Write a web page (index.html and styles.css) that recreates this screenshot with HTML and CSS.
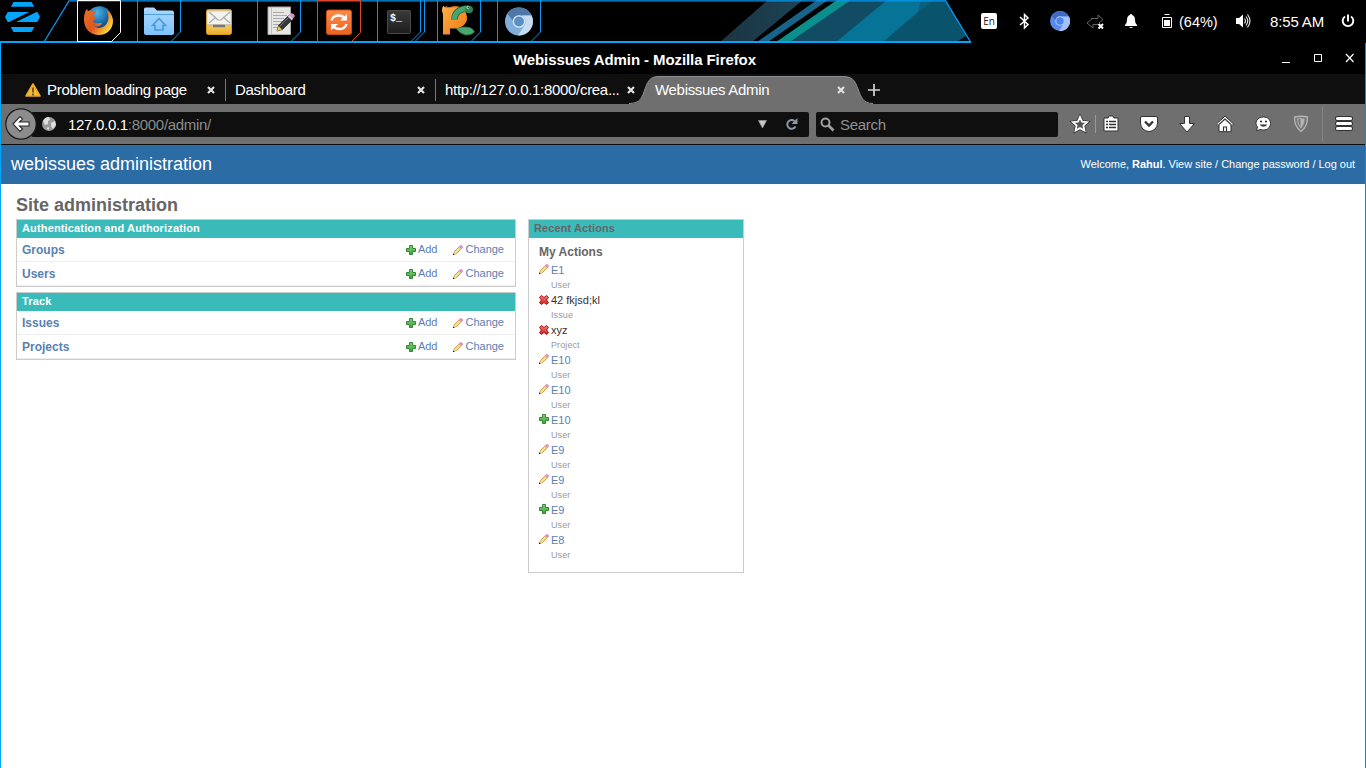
FILE: index.html
```html
<!DOCTYPE html>
<html lang="en">
<head>
<meta charset="utf-8">
<title>Webissues Admin</title>
<link rel="stylesheet" href="styles.css">
</head>
<body>
<svg class="defs" aria-hidden="true">
  <defs>
    <linearGradient id="gPlus" x2="0" y2="1"><stop stop-color="#7fd07a"/><stop offset="1" stop-color="#3fa53c"/></linearGradient>
    <linearGradient id="gRed" x2="0" y2="1"><stop stop-color="#f58080"/><stop offset="1" stop-color="#d01c1c"/></linearGradient>
    <linearGradient id="gFolder" x2="0" y2="1"><stop stop-color="#a9d9ff"/><stop offset="1" stop-color="#7fc3fb"/></linearGradient>
    <linearGradient id="gMail" x2="0" y2="1"><stop stop-color="#f6c65a"/><stop offset=".5" stop-color="#ffd978"/><stop offset="1" stop-color="#e9a928"/></linearGradient>
    <linearGradient id="gOrange" x2="0" y2="1"><stop stop-color="#ff8a4a"/><stop offset="1" stop-color="#ea6322"/></linearGradient>
    <linearGradient id="gTerm" x2="0" y2="1"><stop stop-color="#3a3a3a"/><stop offset="1" stop-color="#1d1d1d"/></linearGradient>
    <linearGradient id="gFox" x1="0" y1="0" x2="1" y2=".6"><stop stop-color="#e8702a"/><stop offset=".55" stop-color="#e2571c"/><stop offset="1" stop-color="#ffd93b"/></linearGradient>
    <radialGradient id="gGlobe" cx=".4" cy=".25" r=".8"><stop stop-color="#49b7e6"/><stop offset=".6" stop-color="#155fa3"/><stop offset="1" stop-color="#0b2a63"/></radialGradient>
    <linearGradient id="gP" x2="1" y2="1"><stop stop-color="#ffb04a"/><stop offset="1" stop-color="#f07810"/></linearGradient>
    <symbol id="plus" viewBox="0 0 10 10"><path d="M3.500.5h3v3h3v3h-3v3h-3v-3h-3v-3h3z" fill="url(#gPlus)" stroke="#2f8a31"/></symbol>
    <symbol id="pencil" viewBox="0 0 10 10"><path d="M.7 9.300l.8-2.800L6.500 1.500l2 2-5 5z" fill="#fbe08a" stroke="#b9852c" stroke-width=".8"/><path d="M1.200 7.200l1.700 1.600-2.200.6z" fill="#f4e3cd"/><path d="M0 8.700h1.300V10H0z" fill="#2b1a12"/><path d="M5.900 2.100l2 2" stroke="#c5c5c5" stroke-width="1.200"/><path d="M6.800 1.300L8 .2 9.800 2 8.700 3.200z" fill="#ef8fd9" stroke="#d983c6" stroke-width=".8"/></symbol>
    <symbol id="cross" viewBox="0 0 10 10"><path d="M2.300.5L5 2.500 7.700.5 9.500 2.300 7.600 5l1.900 2.700-1.800 1.800L5 7.500 2.300 9.500.5 7.700 2.400 5 .5 2.300z" fill="url(#gRed)" stroke="#a51212"/></symbol>
    <symbol id="tabx" viewBox="0 0 8 8"><path d="M1 1l6 6M7 1L1 7" stroke="#e2e2e2" stroke-width="2.200"/></symbol>
  </defs>
</svg>

<header class="panel">
  <svg class="panel-art" width="980" height="44" viewBox="0 0 980 44">
    <clipPath id="clip"><path d="M0 0H946L971 42H0z"/></clipPath>
    <linearGradient id="band" x1="0" x2="1"><stop stop-color="#1b3442"/><stop offset="1" stop-color="#1c4356"/></linearGradient>
    <g clip-path="url(#clip)">
      <path d="M768 0h35l-51 42h-32z" fill="url(#band)"/>
      <path d="M817 0h11l-60 42h-11z" fill="#17638a"/>
      <path d="M850 0h100v42H790z" fill="#124b64"/>
      <path d="M837 0h14l-61 42h-14z" fill="#0a8f8c"/>
      <path d="M887 0h60l-55 42h-56z" fill="#067496"/>
      <path d="M918 12L934 0h20l20 42h-91z" fill="#0a536d"/>
      <path d="M918 12L921 0h14z" fill="#0a5f7d"/>
      <path d="M971 33l-15 9h15z" fill="#010d14"/>
    </g>
    <path d="M44 42L69 .8H945.500L970 41" fill="none" stroke="#0496f0" stroke-width="1.300"/>
    <path d="M0 42H971" stroke="#04a4fa" stroke-width="2"/>
    <g fill="#04a4fa"><path d="M13.500 2h18l2.800 4.700H10.800z"/><path d="M7.700 12h21.500L9 22H7.700L5 17z"/><path d="M36.500 12h1L40 17l-2.700 5H16z"/><path d="M10.800 27h23.500l-2.800 5h-18z"/></g>
  </svg>
  <nav class="launchers">
    <svg class="slot" viewBox="0 0 60 42"><path d="M.5.5h43v32l-9 9H.5z" fill="none" stroke="#fff"/>
      <circle cx="22.500" cy="19" r="12.800" fill="url(#gGlobe)"/>
      <path d="M8 13c0-2 1-3 2-4l1 2c2-1 3-1 4 0 2 0 4 0 4 1-1 2-3 2-3 4l3 1c0 2-3 2-3 4 1 3 5 2 9 2-1 3-5 4-8 3 5 4 11 1 13-3 3-5 1-10-1-13 4 2 7 6 7 11 0 8-6 14-14 14S7 29 7 20c0-3 0-5 1-7z" fill="url(#gFox)"/></svg>
    <svg class="slot" viewBox="0 0 60 42"><path d="M.5 0v41M43.500 0v32l-9 9" fill="none" stroke="#0496f0"/>
      <path d="M7 9q0-1.500 1.500-1.500H17l3 3h15q2 0 2 2V33q0 2-2 2H9q-2 0-2-2z" fill="url(#gFolder)"/><path d="M7 14.500h30" stroke="#549fd8"/><path d="M15.500 25.500L22 18.500l6.500 7h-2.500v4.500H18v-4.500z" fill="none" stroke="#4b9ad8" stroke-width="1.700"/></svg>
    <svg class="slot" viewBox="0 0 60 42"><rect x="9.500" y="9.500" width="25" height="25" rx="2" fill="url(#gMail)" stroke="#d99a1c"/><path d="M10 11h24v13.500H10z" fill="#f3f3ee" stroke="#bbb" stroke-width=".7"/><path d="M12 12l9 8h3l9-8M12 23l7-6M33 23l-7-6" fill="none" stroke="#aaa" stroke-width="1.200"/><path d="M10 25h24v2H10z" fill="#f2c04c"/><path d="M16 26h12" stroke="#78777a" stroke-width="2.500"/></svg>
    <svg class="slot" viewBox="0 0 60 42"><path d="M.5 0v41M43.500 0v32l-9 9" fill="none" stroke="#0496f0"/>
      <path d="M11 7h22.500v27.500H11z" fill="#e6e6e4" stroke="#aaa"/><path d="M14.500 7v27" stroke="#eeaaaa"/><path d="M16 12.500h11M16 15.500h14M16 18.500h11M16 21.500h11M16 24.500h8M16 27.500h5" stroke="#aaa"/><path d="M20 31l1.500-5.500L32 15l4 4-10.500 10.500z" fill="#383838" stroke="#111" stroke-width=".6"/><path d="M23 26l9-9" stroke="#777"/><path d="M20 31l1.500-5 3.500 3.500z" fill="#f1c44d"/><path d="M31.500 15.500l4 4" stroke="#ddd" stroke-width="2"/><path d="M33 14q3-2 5 2l-2 2.500-4-3.500z" fill="#dc91d4"/></svg>
    <svg class="slot" viewBox="0 0 60 42"><path d="M.5.5h43v32l-9 9H.5z" fill="none" stroke="#dc452d"/>
      <rect x="9.500" y="10" width="25" height="24.500" rx="2" fill="url(#gOrange)" stroke="#c64e12"/><path d="M14.500 20.500q1.500-5 7-5 4 0 6 2.500M29.500 24q-1.500 5-7 5-4 0-6-2.500" fill="none" stroke="#fff" stroke-width="2.400"/><path d="M30 14v6.500h-7zM14 30.500V24h7z" fill="#fff"/></svg>
    <svg class="slot" viewBox="0 0 60 42"><path d="M.5 0v41M43.500 0v32l-9 9M47.500 0v32l-9 9" fill="none" stroke="#0496f0"/>
      <rect x="10.500" y="10.500" width="23" height="23" rx="1" fill="url(#gTerm)" stroke="#4a4a4a"/><text x="13" y="21" class="term">$_</text></svg>
    <svg class="slot" viewBox="0 0 60 42"><path d="M.5 0v41M43.500 0v32l-9 9" fill="none" stroke="#0496f0"/>
      <path d="M19 28.500q3-2 9-1.500 8 0 9.500 5-3 3.500-9 3-5-1-9.500-6.500z" fill="#4aa56f" stroke="#1f6b43" stroke-width=".7"/>
      <path d="M9 33.500V22q0-5.500 6-5.500M7 8q3 3 8 1.500 4-1 6 0M12 25h5q10-1 10-7" fill="none" stroke="#d96c0c" stroke-width="6"/>
      <path d="M6.500 6q3 3.500 8.500 1.500 14-2 15 9 0 10-11 12h-6v6h-7V21q0-8 8-8h4q4 1 4 5t-5 5h-3q2-4-1-5-3 0-7 4V14q-2-4 0-8z" fill="url(#gP)"/>
      <path d="M17.500 19.500c0-7 5-11 14-11" fill="none" stroke="#1e6845" stroke-width="6.500"/><path d="M17.500 19.500c0-7 5-11 14-11" fill="none" stroke="#46a670" stroke-width="5"/><ellipse cx="32" cy="9.500" rx="4" ry="3.700" fill="#2e8354"/><circle cx="31" cy="7.500" r="1.300" fill="#fff"/><circle cx="31.300" cy="7.500" r=".7" fill="#000"/></svg>
    <svg class="slot" viewBox="0 0 60 42"><path d="M.5 0v41M43.500 0v32l-9 9" fill="none" stroke="#0496f0"/>
      <circle cx="22" cy="21.500" r="14" fill="#80add9"/><path d="M22 7.500a14 14 0 0 1 12.500 8H22q-5 0-6 5L10 13.500Q14 7.500 22 7.500z" fill="#4f78a6"/><path d="M34.500 15.500A14 14 0 0 1 21 35.500l7-11q2-5-3-9z" fill="#c7dcf0"/><circle cx="22" cy="21.500" r="6.300" fill="#d5e6f6"/><circle cx="22" cy="21.500" r="5" fill="#5b8fc4"/></svg>
  </nav>
  <div class="tray">
    <span class="lang">En</span>
    <svg class="ti bt" viewBox="0 0 20 20"><path d="M6 6l8 7.500-3.500 3.500V3.500L14 7l-8 7" fill="none" stroke="#fff" stroke-width="1.500"/></svg>
    <svg class="ti chr" viewBox="0 0 20 20"><circle cx="10" cy="10" r="10" fill="#5b8bea"/><path d="M10 0a10 10 0 0 1 9 5.500H10q-4 0-4.500 4L1.500 4.500Q4.500 0 10 0z" fill="#4069c4"/><path d="M19 5.500A10 10 0 0 1 9 20l5-8q1-4-2-6.500z" fill="#a3c1fb"/><circle cx="10" cy="10" r="4.700" fill="#b5cffc"/><circle cx="10" cy="10" r="3.700" fill="#4a86f2"/></svg>
    <svg class="ti net" viewBox="0 0 20 20"><path d="M5 7.500h7V4l5 4.500-4 3.500M12 13.500H7V17l-6-5 6-5" fill="none" stroke="#666"/><path d="M12.500 13l4.500 4.500M17 13l-4.500 4.500" stroke="#fff" stroke-width="2"/></svg>
    <svg class="ti bell" viewBox="0 0 20 20"><path d="M10 3q1 0 1.300 1Q14 5 14 9q0 3.500 2 5v1H4v-1q2-1.500 2-5 0-4 2.700-5Q9 3 10 3zM8 16h4q-2 2-4 0z" fill="#fff"/></svg>
    <svg class="ti bat" viewBox="0 0 20 20"><path d="M7.500 3.500h5M5.500 6.500h9v10h-9z" fill="none" stroke="#fff"/><path d="M7 9h6v6H7z" fill="#fff"/></svg>
    <span class="pct">(64%)</span>
    <svg class="ti vol" viewBox="0 0 20 20"><path d="M3 7h3l4-3.500v13L6 13H3z" fill="#fff"/><path d="M11.500 7.500q2 2.500 0 5M13 5.500q3.500 4.500 0 9M14.500 3.500q5 6.500 0 13" fill="none" stroke="#ddd" stroke-width="1.200"/></svg>
    <span class="clock">8:55 AM</span>
    <svg class="ti pow" viewBox="0 0 20 20"><path d="M7 5.500a5.300 5.300 0 1 0 6 0M10 3.500v7" fill="none" stroke="#fff" stroke-width="1.900"/></svg>
  </div>
</header>

<main class="window">
  <div class="titlebar">
    <span class="title">Webissues Admin - Mozilla Firefox</span>
    <svg class="winbtns" width="80" height="16" viewBox="0 0 80 16"><path d="M1 12.500h8" stroke="#fff"/><path d="M33.500 4.500h7v7h-7z" fill="none" stroke="#fff"/><path d="M65 4l7.500 8M72.500 4L65 12" stroke="#fff" stroke-width="1.200"/></svg>
  </div>
  <div class="tabs">
    <div class="tab"><svg class="warn" viewBox="0 0 16 16"><path d="M8 2l7 12H1z" fill="#f5b93d" stroke="#f0aa2a" stroke-width="1.500" stroke-linejoin="round"/><path d="M8 5.500v5M8 11.500v2" stroke="#5c3b10" stroke-width="1.500"/></svg><span class="label">Problem loading page</span><svg class="x"><use href="#tabx"/></svg></div>
    <div class="tab sep"><span class="label">Dashboard</span><svg class="x"><use href="#tabx"/></svg></div>
    <div class="tab sep"><span class="label">http://127.0.0.1:8000/crea...</span><svg class="x"><use href="#tabx"/></svg></div>
    <div class="tab active"><svg class="shape" width="244" height="30" viewBox="0 0 244 30"><path d="M0 30C12 30 13 23 16 15S21 2.500 30 2.500H214C224 2.500 226 7 229 15S234 30 244 30z" fill="#6f6f6f"/><path d="M0 29.500C12 29.500 13 23 16 15S21 2.500 30 2.500H214C224 2.500 226 7 229 15S234 29.500 244 29.500" fill="none" stroke="#8b8f94"/></svg><span class="label">Webissues Admin</span><svg class="x"><use href="#tabx"/></svg></div>
    <svg class="newtab" width="12" height="12" viewBox="0 0 12 12"><path d="M0 6h12M6 0v12" stroke="#d4d4d4" stroke-width="1.700"/></svg>
  </div>
  <div class="toolbar">
    <svg class="back" viewBox="0 0 32 32"><circle cx="16" cy="16" r="15.200" fill="#8c8c8c" stroke="#1a1a1a" stroke-width="1.200"/><path d="M8 16l7-7.500 2.500 2.500-3 3H24v4h-9.500l3 3-2.500 2.500z" fill="#fff" stroke="#2b2b2b" stroke-width="1.100"/></svg>
    <div class="url">
      <svg class="globe" viewBox="0 0 16 16"><circle cx="8" cy="8" r="7" fill="#999"/><path d="M2 5q2-4 6-4l1 3-2 1v3l-3 1zM10 7l4-2 1 4-3 4-2-3zM5 12l3-1v3z" fill="#ddd"/></svg>
      <span class="addr"><b>127.0.0.1</b>:8000/admin/</span>
      <svg class="drop" width="10" height="10" viewBox="0 0 10 10"><path d="M.5 1.500h8L4.500 9z" fill="#c9c9c9" stroke="#999" stroke-width=".7"/></svg>
      <svg class="reload" width="14" height="14" viewBox="0 0 14 14"><path d="M10.500 9.500A4.400 4.400 0 1 1 9.500 4" fill="none" stroke="#8b98a5" stroke-width="2"/><path d="M12.500 1v6H6.500z" fill="#8b98a5"/></svg>
    </div>
    <div class="search"><svg width="15" height="15" viewBox="0 0 15 15"><circle cx="5.500" cy="5.500" r="4" fill="none" stroke="#a0a0a0" stroke-width="2"/><path d="M8.500 8.500l5 5" stroke="#a0a0a0" stroke-width="2.600"/></svg><span>Search</span></div>
    <div class="tools">
      <svg class="star" viewBox="0 0 20 20"><path d="M10 3l2.100 4.600 5 .6-3.700 3.400 1 5L10 14.100l-4.400 2.500 1-5-3.700-3.400 5-.6z" fill="#6f6f6f" stroke="#333" stroke-width="3.200"/><path d="M10 3l2.100 4.600 5 .6-3.700 3.400 1 5L10 14.100l-4.400 2.500 1-5-3.700-3.400 5-.6z" fill="#555" stroke="#fff" stroke-width="1.800"/></svg>
      <i class="div short"></i>
      <svg class="tool" viewBox="0 0 20 20"><path d="M3 4h4l1-2h4l1 2h4v13H3z" fill="#fff" stroke="#333"/><path d="M5 7.500h2M8 7.500h7M5 10.500h2M8 10.500h7M5 13.500h2M8 13.500h7" stroke="#333" stroke-width="1.300"/></svg>
      <svg class="tool" viewBox="0 0 20 20"><path d="M3 2.500h14q1.500 0 1.500 1.500v5A8.500 8.500 0 0 1 1.500 9V4Q1.500 2.500 3 2.500z" fill="#fff" stroke="#333"/><path d="M6 7.500l4 4 4-4" fill="none" stroke="#333" stroke-width="2.300"/></svg>
      <svg class="tool" viewBox="0 0 20 20"><path d="M7.500 2.500h5v7h5L10 18 2.500 9.500h5z" fill="#fff" stroke="#333"/></svg>
      <svg class="tool" viewBox="0 0 20 20"><path d="M10 2l8.500 8-1.500 1.500-1-.8v7H4v-7l-1 .8L1.500 10z" fill="#fff" stroke="#333"/><path d="M4 10.500l6-5.500 6 5.500M8.500 17.500v-4.500h3v4.500" fill="none" stroke="#333" stroke-width="1.200"/></svg>
      <svg class="tool" viewBox="0 0 20 20"><path d="M10.500 3c4.500 0 7 2.800 7 6.500s-3 6.500-7 6.500q-1.500 0-2.500-.5l-4.500 1 1-3.500q-1.500-1.500-1.500-3.500C3 5.800 6 3 10.500 3z" fill="#fff" stroke="#333"/><circle cx="8" cy="7.500" r="1.100" fill="#333"/><circle cx="13" cy="7.500" r="1.100" fill="#333"/><path d="M6.500 10.500q4 4.500 8 0z" fill="#333"/></svg>
      <svg class="tool" viewBox="0 0 20 20"><path d="M3.500 3q6.500-1.500 13 0 .5 9-6.500 14.500Q3 12 3.500 3z" fill="#777" stroke="#b5b5b5" stroke-width="1.300"/><path d="M6.500 5q3.500-.7 3.500-.7V14Q6.500 10 6.500 5z" fill="none" stroke="#b5b5b5"/><path d="M10 4.300q2 0 3.500.7 0 5-3.500 9z" fill="#b5b5b5"/></svg>
      <i class="div"></i>
      <svg class="tool menu" viewBox="0 0 20 20"><path d="M3.500 4.500h13M3.500 9.500h13M3.500 14.500h13" stroke="#333" stroke-width="5" stroke-linecap="round"/><path d="M3.500 4.500h13M3.500 9.500h13M3.500 14.500h13" stroke="#fff" stroke-width="3" stroke-linecap="round"/></svg>
    </div>
  </div>
  <div class="site-header"><h1>webissues administration</h1><p>Welcome, <strong>Rahul</strong>. <a>View site</a> / <a>Change password</a> / <a>Log out</a></p></div>
  <section class="content">
    <h2>Site administration</h2>
    <div class="columns">
      <div class="apps">
        <div class="module">
          <h3>Authentication and Authorization</h3>
          <div class="row"><b>Groups</b><a class="add"><svg><use href="#plus"/></svg>Add</a><a class="chg"><svg><use href="#pencil"/></svg>Change</a></div>
          <div class="row"><b>Users</b><a class="add"><svg><use href="#plus"/></svg>Add</a><a class="chg"><svg><use href="#pencil"/></svg>Change</a></div>
        </div>
        <div class="module">
          <h3>Track</h3>
          <div class="row"><b>Issues</b><a class="add"><svg><use href="#plus"/></svg>Add</a><a class="chg"><svg><use href="#pencil"/></svg>Change</a></div>
          <div class="row"><b>Projects</b><a class="add"><svg><use href="#plus"/></svg>Add</a><a class="chg"><svg><use href="#pencil"/></svg>Change</a></div>
        </div>
      </div>
      <aside class="recent">
        <h3>Recent Actions</h3>
        <h4>My Actions</h4>
        <ul>
          <li><svg><use href="#pencil"/></svg><a>E1</a><small>User</small></li>
          <li class="deleted"><svg><use href="#cross"/></svg><span>42 fkjsd;kl</span><small>Issue</small></li>
          <li class="deleted"><svg><use href="#cross"/></svg><span>xyz</span><small>Project</small></li>
          <li><svg><use href="#pencil"/></svg><a>E10</a><small>User</small></li>
          <li><svg><use href="#pencil"/></svg><a>E10</a><small>User</small></li>
          <li><svg><use href="#plus"/></svg><a>E10</a><small>User</small></li>
          <li><svg><use href="#pencil"/></svg><a>E9</a><small>User</small></li>
          <li><svg><use href="#pencil"/></svg><a>E9</a><small>User</small></li>
          <li><svg><use href="#plus"/></svg><a>E9</a><small>User</small></li>
          <li><svg><use href="#pencil"/></svg><a>E8</a><small>User</small></li>
        </ul>
      </aside>
    </div>
  </section>
</main>
</body>
</html>
```
FILE: styles.css
```css
* { box-sizing: border-box; margin: 0; padding: 0; }
body { width: 1366px; height: 768px; overflow: hidden; background: #000; font-family: "Liberation Sans", Arial, sans-serif; }
svg { display: block; flex: none; }
.defs { position: absolute; width: 0; height: 0; }

/* Desktop panel */
.panel { height: 43px; display: flex; position: relative; color: #fff; }
.panel-art { position: absolute; left: 0; top: 0; }
.launchers { display: flex; margin-left: 77px; width: 902px; position: relative; }
.slot { width: 60px; height: 42px; }
.term { font: bold 10px "Liberation Mono", monospace; fill: #fff; }
.tray { display: flex; align-items: center; height: 42px; font-size: 15px; white-space: nowrap; }
.ti { width: 20px; height: 20px; }
.lang { width: 16px; height: 16px; margin: 0 2px; background: #fff; color: #222; font: 10px/17px "Open Sans", sans-serif; text-align: center; border-radius: 2px; letter-spacing: -.2px; }
.bt { margin-left: 15px; }
.chr, .net, .bat { margin-left: 16px; }
.bell { margin-left: 15px; }
.pct { width: 40px; margin-left: 2px; font-size: 14.500px; padding-top: 2px; }
.vol { margin-left: 14px; }
.clock { width: 55px; margin-left: 17px; letter-spacing: -.15px; padding-top: 1px; }
.pow { margin-left: 13px; }

/* Browser window */
.window { height: 725px; background: #fff; border-left: 1px solid #04a4fa; border-right: 1px solid #0b8bd0; display: flex; flex-direction: column; }
.titlebar { height: 31px; background: #000; color: #fff; display: flex; align-items: center; padding: 2px 4px 0 512px; justify-content: space-between; }
.title { font-size: 15px; font-weight: bold; line-height: 20px; white-space: nowrap; letter-spacing: -.09px; }
.winbtns { margin-top: -3px; }
.tabs { height: 30px; background: #0f0f0f; display: flex; align-items: center; padding-left: 15px; }
.tab { width: 210px; height: 30px; display: flex; align-items: center; padding: 2px 11px 0 9px; position: relative; color: #fff; font-size: 15px; }
.sep::before { content: ""; position: absolute; left: -1px; top: 5px; height: 22px; width: 1px; background: #777; }
.tab .x { width: 8px; height: 8px; margin-left: auto; position: relative; }
.warn { width: 16px; height: 16px; margin-right: 6px; }
.label { white-space: nowrap; position: relative; letter-spacing: -.31px; padding-bottom: 2px; }
.shape { position: absolute; left: -17px; top: 0; }
.newtab { margin-left: 12px; margin-top: 2px; }
.toolbar { height: 41px; background: #6f6f6f; border-bottom: 1px solid #0c0c0c; display: flex; align-items: center; padding-left: 4px; }
.back { width: 32px; height: 32px; z-index: 1; }
.url { width: 778px; height: 25px; margin-left: -6px; background: #0f0f0f; border-radius: 2px; display: flex; align-items: center; padding-left: 10px; color: #8b8b8b; font-size: 15px; }
.globe { width: 16px; height: 16px; }
.addr { margin-left: 11px; padding-top: 1px; white-space: nowrap; letter-spacing: -.3px; }
.addr b { font-weight: normal; color: #fff; }
.drop { margin-left: auto; }
.reload { margin: 0 10px 0 17px; }
.search { width: 242px; height: 25px; margin-left: 7px; background: #0f0f0f; border-radius: 2px; display: flex; align-items: center; gap: 5px; padding-left: 4px; color: #929292; font-size: 15px; letter-spacing: -.3px; }
.search span { padding-top: 1px; }
.tools { display: flex; align-items: center; }
.tool { width: 20px; height: 20px; margin: 0 9px; }
.menu { margin-left: 10px; }
.star { width: 20px; height: 20px; margin-left: 12px; margin-right: 5px; }
.div { width: 1px; height: 34px; margin: 0 1px 0 2px; background: #858585; }
.div.short { height: 18px; margin: 0 -4px 0 0; background: #999; }

/* Site administration page */
.site-header { height: 39px; background: #2c6ca4; color: #fff; display: flex; align-items: center; justify-content: space-between; padding: 0 10px; }
.site-header h1 { font-size: 18px; font-weight: normal; }
.site-header p { font-size: 11px; letter-spacing: -.03px; padding-bottom: 2px; }
.content { padding: 11px 15px 0; }
.content h2 { font-size: 18px; line-height: 20px; color: #666; margin-bottom: 4px; }
.columns { display: flex; align-items: flex-start; gap: 12px; }
.apps { width: 500px; display: flex; flex-direction: column; gap: 5px; }
.module, .recent { border: 1px solid #ccc; background: #fff; }
.module h3, .recent h3 { height: 18px; padding-left: 5px; background: #3bbaba; color: #fff; font-size: 11px; line-height: 17px; letter-spacing: .15px; }
.row { height: 24px; display: flex; align-items: flex-start; border-bottom: 1px solid #eee; padding: 5px 11px 0 5px; font-size: 11px; line-height: 13px; }
.row b { font-size: 12px; line-height: 14px; color: #5b80b2; margin-right: auto; }
.row a, .recent a { color: #5b80b2; }
.row a { display: flex; gap: 2px; }
.row svg { width: 10px; height: 10px; margin-top: 2px; }
.chg { margin-left: 16px; }
.recent { width: 216px; height: 354px; }
.recent h3 { color: #666; letter-spacing: .1px; }
.recent h4 { font-size: 12px; line-height: 14px; color: #666; margin: 7px 0 4px 10px; }
.recent ul { list-style: none; padding-left: 10px; }
.recent li { height: 30px; display: grid; grid-template-columns: 12px auto; grid-template-rows: 15px 15px; font-size: 11px; line-height: 14px; color: #333; }
.recent li svg { width: 10px; height: 10px; margin-top: 1px; }
.recent .deleted svg { margin-top: 2px; }
.recent small { grid-column: 2; font-size: 9px; line-height: 14px; color: #999; letter-spacing: .1px; }
```
